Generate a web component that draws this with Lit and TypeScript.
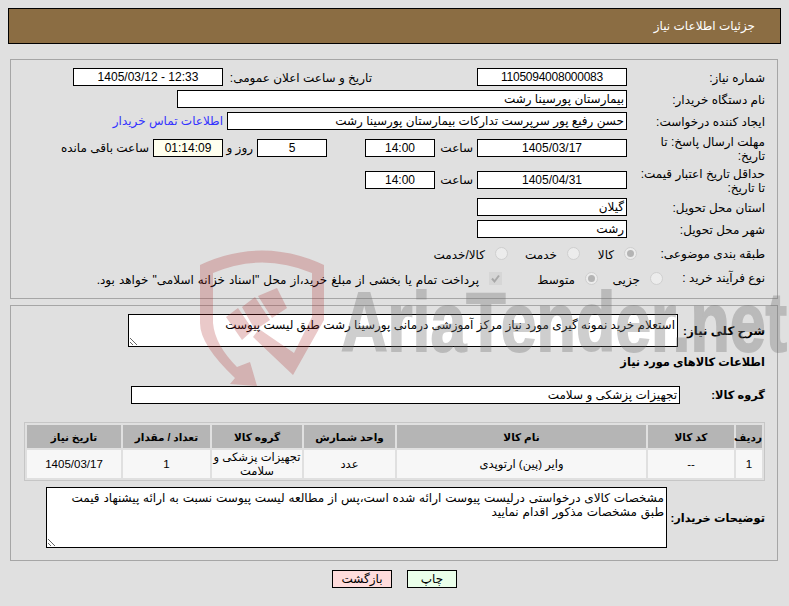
import { LitElement, html, css, svg } from "lit";
import { customElement } from "lit/decorators.js";

const rows = [
  { n: "1", code: "--", name: "وایر (پین) ارتوپدی", unit: "عدد", group: "تجهیزات پزشکی و سلامت", qty: "1", date: "1405/03/17" },
];

const watermark = svg`
  <g fill="rgba(170,40,40,.25)">
    <path fill-rule="evenodd" d="M200 265 Q262 236 324 265 L324 320 L293 375 L253 337 L259 329 L294 353 L312 317 L312 273 Q262 252 213 273 L213 323 Q215 345 237 367 L250 362 L257 386 L230 384 L235 378 Q200 345 200 323 Z"/>
    <path d="M258 296 L277 288 L287 308 L272 318 Z"/>
    <path d="M242 307 L255 297 L270 320 L255 330 Z"/>
    <path d="M226 317 L238 308 L253 330 L242 340 Z"/>
  </g>
  <text x="341" y="351" textLength="446" lengthAdjust="spacingAndGlyphs" class="wm">AriaTender.net</text>
`;

@customElement("app-root")
export class AppRoot extends LitElement {
  static styles = css`
    :host {
      display: block;
      position: relative;
      width: 789px;
      height: 606px;
      overflow: hidden;
      background: #e0e0e0;
      color: #000;
      direction: rtl;
      font: 12px/14px "Liberation Sans", "DejaVu Sans", sans-serif;
    }
    .watermark { position: absolute; inset: 0; z-index: 1; pointer-events: none; }
    .wm {
      font: bold 84px "Liberation Sans", sans-serif;
      fill: #6e6e6e;
      stroke: #6e6e6e;
      stroke-width: 2px;
      opacity: 0.33;
      direction: ltr;
    }
    .header {
      margin: 8px 8px 15px 8px;
      height: 34px;
      border: 1px solid #000;
      background: #8b6d43;
      color: #fff;
      display: flex;
      align-items: center;
      padding-right: 25px;
    }
    .panel { margin: 0 11px 0 10px; border: 1px solid #a6a6a6; padding: 8px 12px 0 0; }
    .p1 { height: 230px; margin-bottom: 6px; display: flex; flex-direction: column; gap: 4px; }
    .p2 { height: 246px; }
    .row { display: flex; align-items: center; }
    .tall { height: 28px; }
    .radio-row { height: 22px; }
    .check-row { height: 20px; }
    .lbl { width: 124px; flex: none; padding-top: 2px; white-space: nowrap; }
    .gap { margin-left: 14px; }
    .gap-opts { margin-left: 4px; }
    .field {
      position: relative;
      z-index: 2;
      box-sizing: border-box;
      flex: none;
      height: 18px;
      border: 1px solid #000;
      background: #fff;
      line-height: 16px;
      padding: 0 2px;
      white-space: nowrap;
      overflow: hidden;
    }
    .c { text-align: center; }
    .id { letter-spacing: -0.25px; }
    .w150 { width: 150px; }
    .w70 { width: 70px; }
    .w400 { width: 400px; }
    .w450 { width: 450px; }
    .timer { background: #ffffee; }
    .t-s { margin: 0 4px; width: 34px; flex: none; }
    .gap105 { margin-right: 105px; }
    .gap5 { margin-right: 5px; }
    .lbl2 { width: 144px; flex: none; padding-top: 2px; }
    .link { color: #3333ff; margin-right: 4px; }
    .gap38 { margin-right: 38px; }
    .gap4 { margin-right: 4px; }
    .mx4 { margin: 0 4px; flex: none; }
    .w22 { width: 22px; white-space: nowrap; }
    .opt { display: flex; align-items: center; gap: 10px; flex: none; }
    .opt > span:last-child { padding-top: 3px; }
    .o57 { width: 57px; }
    .o72 { width: 72px; }
    .o65 { width: 65px; }
    .o96 { width: 96px; }
    .radio {
      box-sizing: border-box;
      width: 13px;
      height: 13px;
      flex: none;
      border-radius: 50%;
      border: 1px solid #cfcfcf;
      background: #ececec;
      display: flex;
      align-items: center;
      justify-content: center;
    }
    .radio.on::after { content: ""; width: 7px; height: 7px; border-radius: 50%; background: #b4b4b4; }
    .check { width: 13px; height: 13px; flex: none; display: block; }
    .opts { display: flex; }
    .l9 { width: 102px; flex: none; }
    .wide { word-spacing: 0.7px; }
    .b { font-weight: bold; font-size: 11.4px; white-space: nowrap; }
    .b-sharh { font-size: 11.8px; }
    textarea {
      position: relative;
      z-index: 0;
      display: block;
      flex: none;
      box-sizing: border-box;
      border: 1px solid #000;
      border-radius: 0;
      background: #fff;
      margin: 0;
      padding: 3px 2px 2px;
      font: inherit;
      color: #000;
      direction: rtl;
      outline: none;
    }
    .ta1 { width: 550px; height: 33px; }
    .ta2 { width: 621px; height: 61px; word-spacing: 0.5px; }
    .l-sharh { width: 87px; flex: none; }
    .l-group { width: 85px; flex: none; }
    .l-desc { width: 98px; flex: none; }
    .w549 { width: 549px; }
    .heading { margin-top: 8px; }
    .group-row { margin-top: 17px; }
    table {
      margin-top: 18px;
      width: 741px;
      table-layout: fixed;
      border-collapse: separate;
      border-spacing: 2px;
      border: 1px solid #c6c6c6;
    }
    th { background: #b5b5b5; height: 23px; padding: 0; font-weight: bold; font-size: 10.5px; }
    td { background: #f7f7f7; height: 28px; padding: 0; text-align: center; font-size: 11.5px; }
    .desc-row { margin-top: 6px; }
    .buttons { display: flex; justify-content: center; gap: 15px; margin-top: 9px; }
    .btn { box-sizing: border-box; height: 18px; border: 1px solid #000; text-align: center; line-height: 16px; }
    .print { width: 50px; background: #eaffea; }
    .back { width: 60px; background: #ffdcdc; }
  `;

  render() {
    return html`
      <svg class="watermark" width="789" height="606" viewBox="0 0 789 606" aria-hidden="true">${watermark}</svg>
      <div class="header">جزئیات اطلاعات نیاز</div>
      <section class="panel p1">
        <div class="row">
          <div class="lbl gap">شماره نیاز:</div>
          <div class="field w150 c id">1105094008000083</div>
          <div class="lbl2 gap105">تاریخ و ساعت اعلان عمومی:</div>
          <div class="field w150 c gap5" dir="ltr">1405/03/12 - 12:33</div>
        </div>
        <div class="row">
          <div class="lbl gap">نام دستگاه خریدار:</div>
          <div class="field w450">بیمارستان پورسینا رشت</div>
        </div>
        <div class="row">
          <div class="lbl gap">ایجاد کننده درخواست:</div>
          <div class="field w400">حسن رفیع پور سرپرست تدارکات بیمارستان پورسینا رشت</div>
          <div class="link">اطلاعات تماس خریدار</div>
        </div>
        <div class="row tall">
          <div class="lbl gap">مهلت ارسال پاسخ: تا<br />تاریخ:</div>
          <div class="field w150 c">1405/03/17</div>
          <div class="t-s">ساعت</div>
          <div class="field w70 c">14:00</div>
          <div class="field w70 c gap38">5</div>
          <div class="mx4 w22">روز و</div>
          <div class="field w70 c timer gap4">01:14:09</div>
          <div class="mx4">ساعت باقی مانده</div>
        </div>
        <div class="row tall">
          <div class="lbl gap">حداقل تاریخ اعتبار قیمت:<br />تا تاریخ:</div>
          <div class="field w150 c">1405/04/31</div>
          <div class="t-s">ساعت</div>
          <div class="field w70 c">14:00</div>
        </div>
        <div class="row">
          <div class="lbl gap">استان محل تحویل:</div>
          <div class="field w150">گیلان</div>
        </div>
        <div class="row">
          <div class="lbl gap">شهر محل تحویل:</div>
          <div class="field w150">رشت</div>
        </div>
        <div class="row radio-row">
          <div class="lbl gap-opts">طبقه بندی موضوعی:</div>
          <div class="opts">
            <div class="opt o57"><span class="radio on"></span><span>کالا</span></div>
            <div class="opt o72"><span class="radio"></span><span>خدمت</span></div>
            <div class="opt"><span class="radio"></span><span>کالا/خدمت</span></div>
          </div>
        </div>
        <div class="row check-row">
          <div class="l9">نوع فرآیند خرید :</div>
          <div class="opts">
            <div class="opt o65"><span class="radio"></span><span>جزیی</span></div>
            <div class="opt o96"><span class="radio on"></span><span>متوسط</span></div>
            <div class="opt">
              <svg class="check" viewBox="0 0 13 13"><rect width="13" height="13" fill="#d6d6d6"/><path d="M3 6.5 L5.5 9.5 L10 3.5" fill="none" stroke="#a8a8a8" stroke-width="2"/></svg>
              <span class="wide">پرداخت تمام یا بخشی از مبلغ خرید،از محل "اسناد خزانه اسلامی" خواهد بود.</span>
            </div>
          </div>
        </div>
      </section>
      <section class="panel p2">
        <div class="row">
          <div class="l-sharh b b-sharh">شرح کلی نیاز:</div>
          <textarea class="ta1" readonly>استعلام خرید نمونه گیری مورد نیاز مرکز آموزشی درمانی پورسینا رشت طبق لیست پیوست</textarea>
        </div>
        <div class="heading b">اطلاعات کالاهای مورد نیاز</div>
        <div class="row group-row">
          <div class="l-group b">گروه کالا:</div>
          <div class="field w549">تجهیزات پزشکی و سلامت</div>
        </div>
        <table>
          <colgroup>
            <col style="width:26px" /><col style="width:86px" /><col style="width:249px" /><col style="width:91px" />
            <col style="width:90px" /><col style="width:87px" /><col style="width:94px" />
          </colgroup>
          <thead>
            <tr>
              <th>ردیف</th><th>کد کالا</th><th>نام کالا</th><th>واحد شمارش</th><th>گروه کالا</th><th>تعداد / مقدار</th><th>تاریخ نیاز</th>
            </tr>
          </thead>
          <tbody>
            ${rows.map(
              (r) => html`<tr>
                <td>${r.n}</td><td>${r.code}</td><td>${r.name}</td><td>${r.unit}</td><td>${r.group}</td><td>${r.qty}</td><td>${r.date}</td>
              </tr>`
            )}
          </tbody>
        </table>
        <div class="row desc-row">
          <div class="l-desc b">توضیحات خریدار:</div>
          <textarea class="ta2" readonly>مشخصات کالای درخواستی درلیست پیوست ارائه شده است،پس از مطالعه لیست پیوست نسبت به ارائه پیشنهاد قیمت&#10;طبق مشخصات مذکور اقدام نمایید</textarea>
        </div>
      </section>
      <div class="buttons">
        <div class="btn print">چاپ</div>
        <div class="btn back">بازگشت</div>
      </div>
    `;
  }
}
